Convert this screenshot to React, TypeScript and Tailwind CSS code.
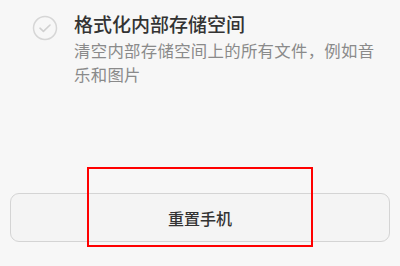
import React from 'react';

const font = { fontFamily: '"Noto Sans CJK SC", "Noto Sans", sans-serif' };

const CheckCircle = () => (
    <svg width="26" height="26" viewBox="0 0 26 26" fill="none">
        <circle cx="13" cy="13" r="11.5" stroke="#d6d6d6" strokeWidth="1.5" />
        <path d="M8 13.2l3.4 3.2 6.6-6.4" stroke="#d0d0d0" strokeWidth="1.6" strokeLinecap="round" strokeLinejoin="round" />
    </svg>
);

const App = () => {
    return (
        <div className="relative w-[400px] h-[266px] bg-[#f7f7f7] overflow-hidden" style={font}>
            <div className="flex pl-[32px] pt-[13px] pr-[20px]">
                <div className="pt-[2px] w-[42px] shrink-0">
                    <CheckCircle />
                </div>
                <div className="flex flex-col">
                    <div className="text-[19px] leading-[22px] text-[#333333] font-medium">格式化内部存储空间</div>
                    <div className="mt-[3px] text-[16.4px] tracking-[0.3px] leading-[24px] text-[#8a8a8a] w-[304px]">
                        清空内部存储空间上的所有文件，例如音乐和图片
                    </div>
                </div>
            </div>

            <div className="mt-[107px] mx-[10px] h-[49px] rounded-[9px] border border-[#d4d4d4] bg-[#f4f4f4] flex items-center justify-center">
                <span className="text-[16px] text-[#333333] font-medium">重置手机</span>
            </div>

            <div className="absolute left-[87px] top-[167px] w-[226px] h-[80px] border-2 border-[#ff0000]" />
        </div>
    );
};

export default App;
